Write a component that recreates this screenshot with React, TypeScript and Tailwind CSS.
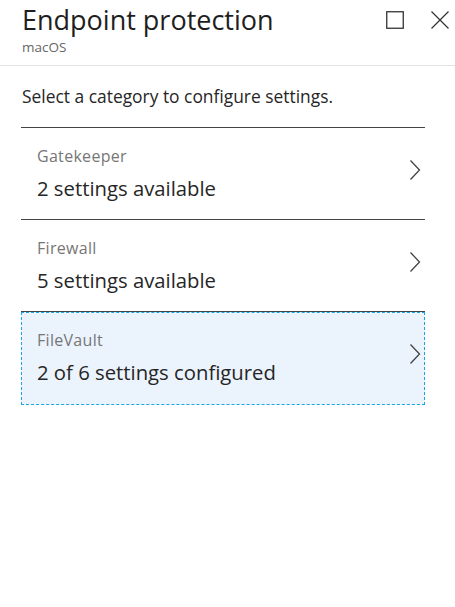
import React from 'react';

const categories = [
  { name: 'Gatekeeper', status: '2 settings available', selected: false },
  { name: 'Firewall', status: '5 settings available', selected: false },
  { name: 'FileVault', status: '2 of 6 settings configured', selected: true },
];

function Chevron() {
  return (
    <svg width="12" height="22" viewBox="0 0 12 22" fill="none" className="shrink-0">
      <path d="M1.5 1.5 L10.5 11 L1.5 20.5" stroke="#444" strokeWidth="1.3" />
    </svg>
  );
}

export default function App() {
  return (
    <div
      className="w-[455px] h-[607px] bg-white text-[#262626] overflow-hidden"
      style={{ fontFamily: '"Segoe UI", "Open Sans", "Noto Sans", sans-serif' }}
    >
      {/* 헤더 */}
      <div className="flex items-start justify-between pl-[22px] pr-[6px] pt-[3px] pb-[9px] border-b border-[#e3e3e3]">
        <div>
          <div className="text-[27px] leading-[34px] text-[#1e1e1e]">Endpoint protection</div>
          <div className="text-[13.5px] leading-[18px] mt-[1px] text-[#666]">macOS</div>
        </div>
        <div className="flex items-center gap-[27px] pt-[8px]">
          <svg width="18" height="18" viewBox="0 0 18 18" fill="none">
            <rect x="0.75" y="0.75" width="16.5" height="16.5" stroke="#333" strokeWidth="1.3" />
          </svg>
          <svg width="18" height="18" viewBox="0 0 18 18" fill="none">
            <path d="M0.5 0.5 L17.5 17.5 M17.5 0.5 L0.5 17.5" stroke="#333" strokeWidth="1.2" />
          </svg>
        </div>
      </div>

      <div className="px-[21px] w-[446px]">
        <div className="text-[17.4px] leading-[22px] pt-[19px] pb-[20px] pl-[1px]">
          Select a category to configure settings.
        </div>

        <div className="w-[404px]">
          {categories.map((c) => (
            <div key={c.name} className="border-t border-[#444]">
              <div
                className={
                  c.selected
                    ? 'flex items-center justify-between pl-[15px] pr-[3px] pt-[16px] pb-[19px] bg-[#ebf3fd] border border-dashed border-[#1ca6e6]'
                    : 'flex items-center justify-between pl-[16px] pr-[4px] pt-[17px] pb-[18px] border-0'
                }
              >
                <div>
                  <div className="text-[16px] leading-[22px] tracking-[0.3px] text-[#767676]">{c.name}</div>
                  <div className="text-[20.3px] leading-[26px] mt-[8px] text-[#262626]">{c.status}</div>
                </div>
                <div className="pb-[6px]">
                  <Chevron />
                </div>
              </div>
            </div>
          ))}
        </div>
      </div>
    </div>
  );
}
